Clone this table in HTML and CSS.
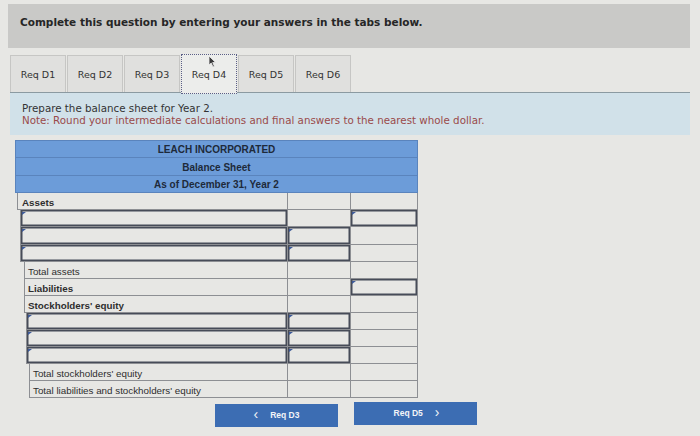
FILE: index.html
```html
<!DOCTYPE html>
<html>
<head>
<meta charset="utf-8">
<link rel="stylesheet" href="styles.css">
</head>
<body>
<div class="page">
  <div class="banner">Complete this question by entering your answers in the tabs below.</div>
  <div class="tabs">
    <div class="tab">Req D1</div>
    <div class="tab">Req D2</div>
    <div class="tab">Req D3</div>
    <div class="tab active">Req D4
      <svg class="cursor" width="9" height="13" viewBox="0 0 9 13"><path d="M1 1 L1 10 L3.2 8 L5 12 L6.4 11.3 L4.7 7.5 L7.6 7.5 Z" fill="#3a3a3a" stroke="#eee" stroke-width="0.8"/></svg>
    </div>
    <div class="tab">Req D5</div>
    <div class="tab">Req D6</div>
  </div>
  <div class="instructions">
    <div>Prepare the balance sheet for Year 2.</div>
    <div class="note">Note: Round your intermediate calculations and final answers to the nearest whole dollar.</div>
  </div>
  <div class="sheet">
    <div class="head">LEACH INCORPORATED</div>
    <div class="head">Balance Sheet</div>
    <div class="head">As of December 31, Year 2</div>
    <div class="row"><div class="cell lbl i0 bold">Assets</div><div class="cell"></div><div class="cell"></div></div>
    <div class="row"><div class="cell in i1"></div><div class="cell"></div><div class="cell in"></div></div>
    <div class="row"><div class="cell in i1"></div><div class="cell in"></div><div class="cell"></div></div>
    <div class="row"><div class="cell in i1"></div><div class="cell in"></div><div class="cell"></div></div>
    <div class="row"><div class="cell lbl i2">Total assets</div><div class="cell"></div><div class="cell"></div></div>
    <div class="row"><div class="cell lbl i2 bold">Liabilities</div><div class="cell"></div><div class="cell in"></div></div>
    <div class="row"><div class="cell lbl i2 bold">Stockholders' equity</div><div class="cell"></div><div class="cell"></div></div>
    <div class="row"><div class="cell in i3"></div><div class="cell in"></div><div class="cell"></div></div>
    <div class="row"><div class="cell in i3"></div><div class="cell in"></div><div class="cell"></div></div>
    <div class="row"><div class="cell in i3"></div><div class="cell in"></div><div class="cell"></div></div>
    <div class="row"><div class="cell lbl i4">Total stockholders' equity</div><div class="cell"></div><div class="cell"></div></div>
    <div class="row"><div class="cell lbl i4">Total liabilities and stockholders' equity</div><div class="cell"></div><div class="cell"></div></div>
  </div>
  <div class="nav">
    <div class="btn prev"><span class="chev">&lsaquo;</span><span>Req D3</span></div>
    <div class="btn next"><span>Req D5</span><span class="chev">&rsaquo;</span></div>
  </div>
</div>
</body>
</html>
```
FILE: styles.css
```css
html, body {
  margin: 0;
  padding: 0;
}
body {
  background: #e7e7e4;
  width: 700px;
  height: 436px;
  overflow: hidden;
  font-family: "DejaVu Sans", sans-serif;
  color: #2b2b2b;
}
.page {
  padding-top: 4px;
}
.banner {
  margin: 0 10px 0 8px;
  height: 44px;
  box-sizing: border-box;
  background: #c9c9c7;
  padding: 12px 0 0 12px;
  font-size: 10.5px;
  font-weight: bold;
  color: #262626;
}
.tabs {
  display: flex;
  gap: 1px;
  margin: 6px 0 0 10px;
  height: 38px;
  align-items: flex-end;
}
.tab {
  position: relative;
  width: 56px;
  height: 37px;
  box-sizing: border-box;
  background: #e0e0de;
  border: 1px solid #c6c6c4;
  border-bottom: none;
  display: flex;
  align-items: center;
  justify-content: center;
  font-size: 9.5px;
  color: #333;
}
.tab.active {
  height: 40px;
  margin-bottom: -2px;
  background: #ecedeb;
  border: 1.5px dotted #5b5f86;
  z-index: 2;
}
.cursor {
  position: absolute;
  left: 26px;
  top: 0px;
}
.instructions {
  margin: 0 10px 0 10px;
  height: 43px;
  box-sizing: border-box;
  background: #d1e1e9;
  border-top: 1.5px solid #8b9aa1;
  padding: 9px 0 0 12px;
  font-size: 10.3px;
  line-height: 12px;
  color: #333;
}
.note {
  color: #9a4a4a;
}
.sheet {
  margin: 5px 0 0 15px;
  width: 403px;
  font-family: "Liberation Sans", Arial, sans-serif;
  font-size: 9.8px;
  color: #2e2e2e;
}
.head {
  height: 17.8px;
  box-sizing: border-box;
  background: #6c9cd9;
  border: 1px solid #5a84bd;
  border-top: none;
  display: flex;
  align-items: center;
  justify-content: center;
  padding-top: 2px;
  font-weight: bold;
  color: #1e2a3a;
  font-size: 10px;
}
.head:first-child {
  border-top: 1px solid #5a84bd;
}
.row {
  display: grid;
  grid-template-columns: 273px 63px 67px;
  height: 17.05px;
}
.cell {
  box-sizing: border-box;
  border-right: 1px solid #8d8f93;
  border-bottom: 1px solid #8d8f93;
  position: relative;
  display: flex;
  align-items: center;
}
.cell.lbl {
  padding-top: 3px;
}
.row .cell:first-child {
  border-left: 1px solid #8d8f93;
}
.i0 { margin-left: 2px; padding-left: 4px; }
.i1 { margin-left: 5px; }
.i2 { margin-left: 9px; padding-left: 3px; }
.i3 { margin-left: 11px; }
.i4 { margin-left: 14px; padding-left: 3px; }
.bold { font-weight: bold; }
.cell.in {
  box-shadow: inset 0 0 0 1.5px #474c58;
}
.cell.in::before {
  content: "";
  position: absolute;
  left: 1px;
  top: 2px;
  border-left: 4px solid #3d5a99;
  border-bottom: 3px solid transparent;
}
.nav {
  display: flex;
  margin: 6px 0 0 215px;
  gap: 16px;
}
.btn {
  width: 123px;
  height: 23px;
  background: #3c6db3;
  color: #f2f4f8;
  font-family: "Liberation Sans", Arial, sans-serif;
  font-weight: bold;
  font-size: 8.5px;
  display: flex;
  align-items: center;
  justify-content: center;
  gap: 12px;
}
.btn.next {
  margin-top: -2px;
  padding-left: 2px;
  box-sizing: border-box;
}
.chev {
  font-size: 14px;
  font-weight: normal;
  line-height: 1;
  margin-top: -2px;
}
```
